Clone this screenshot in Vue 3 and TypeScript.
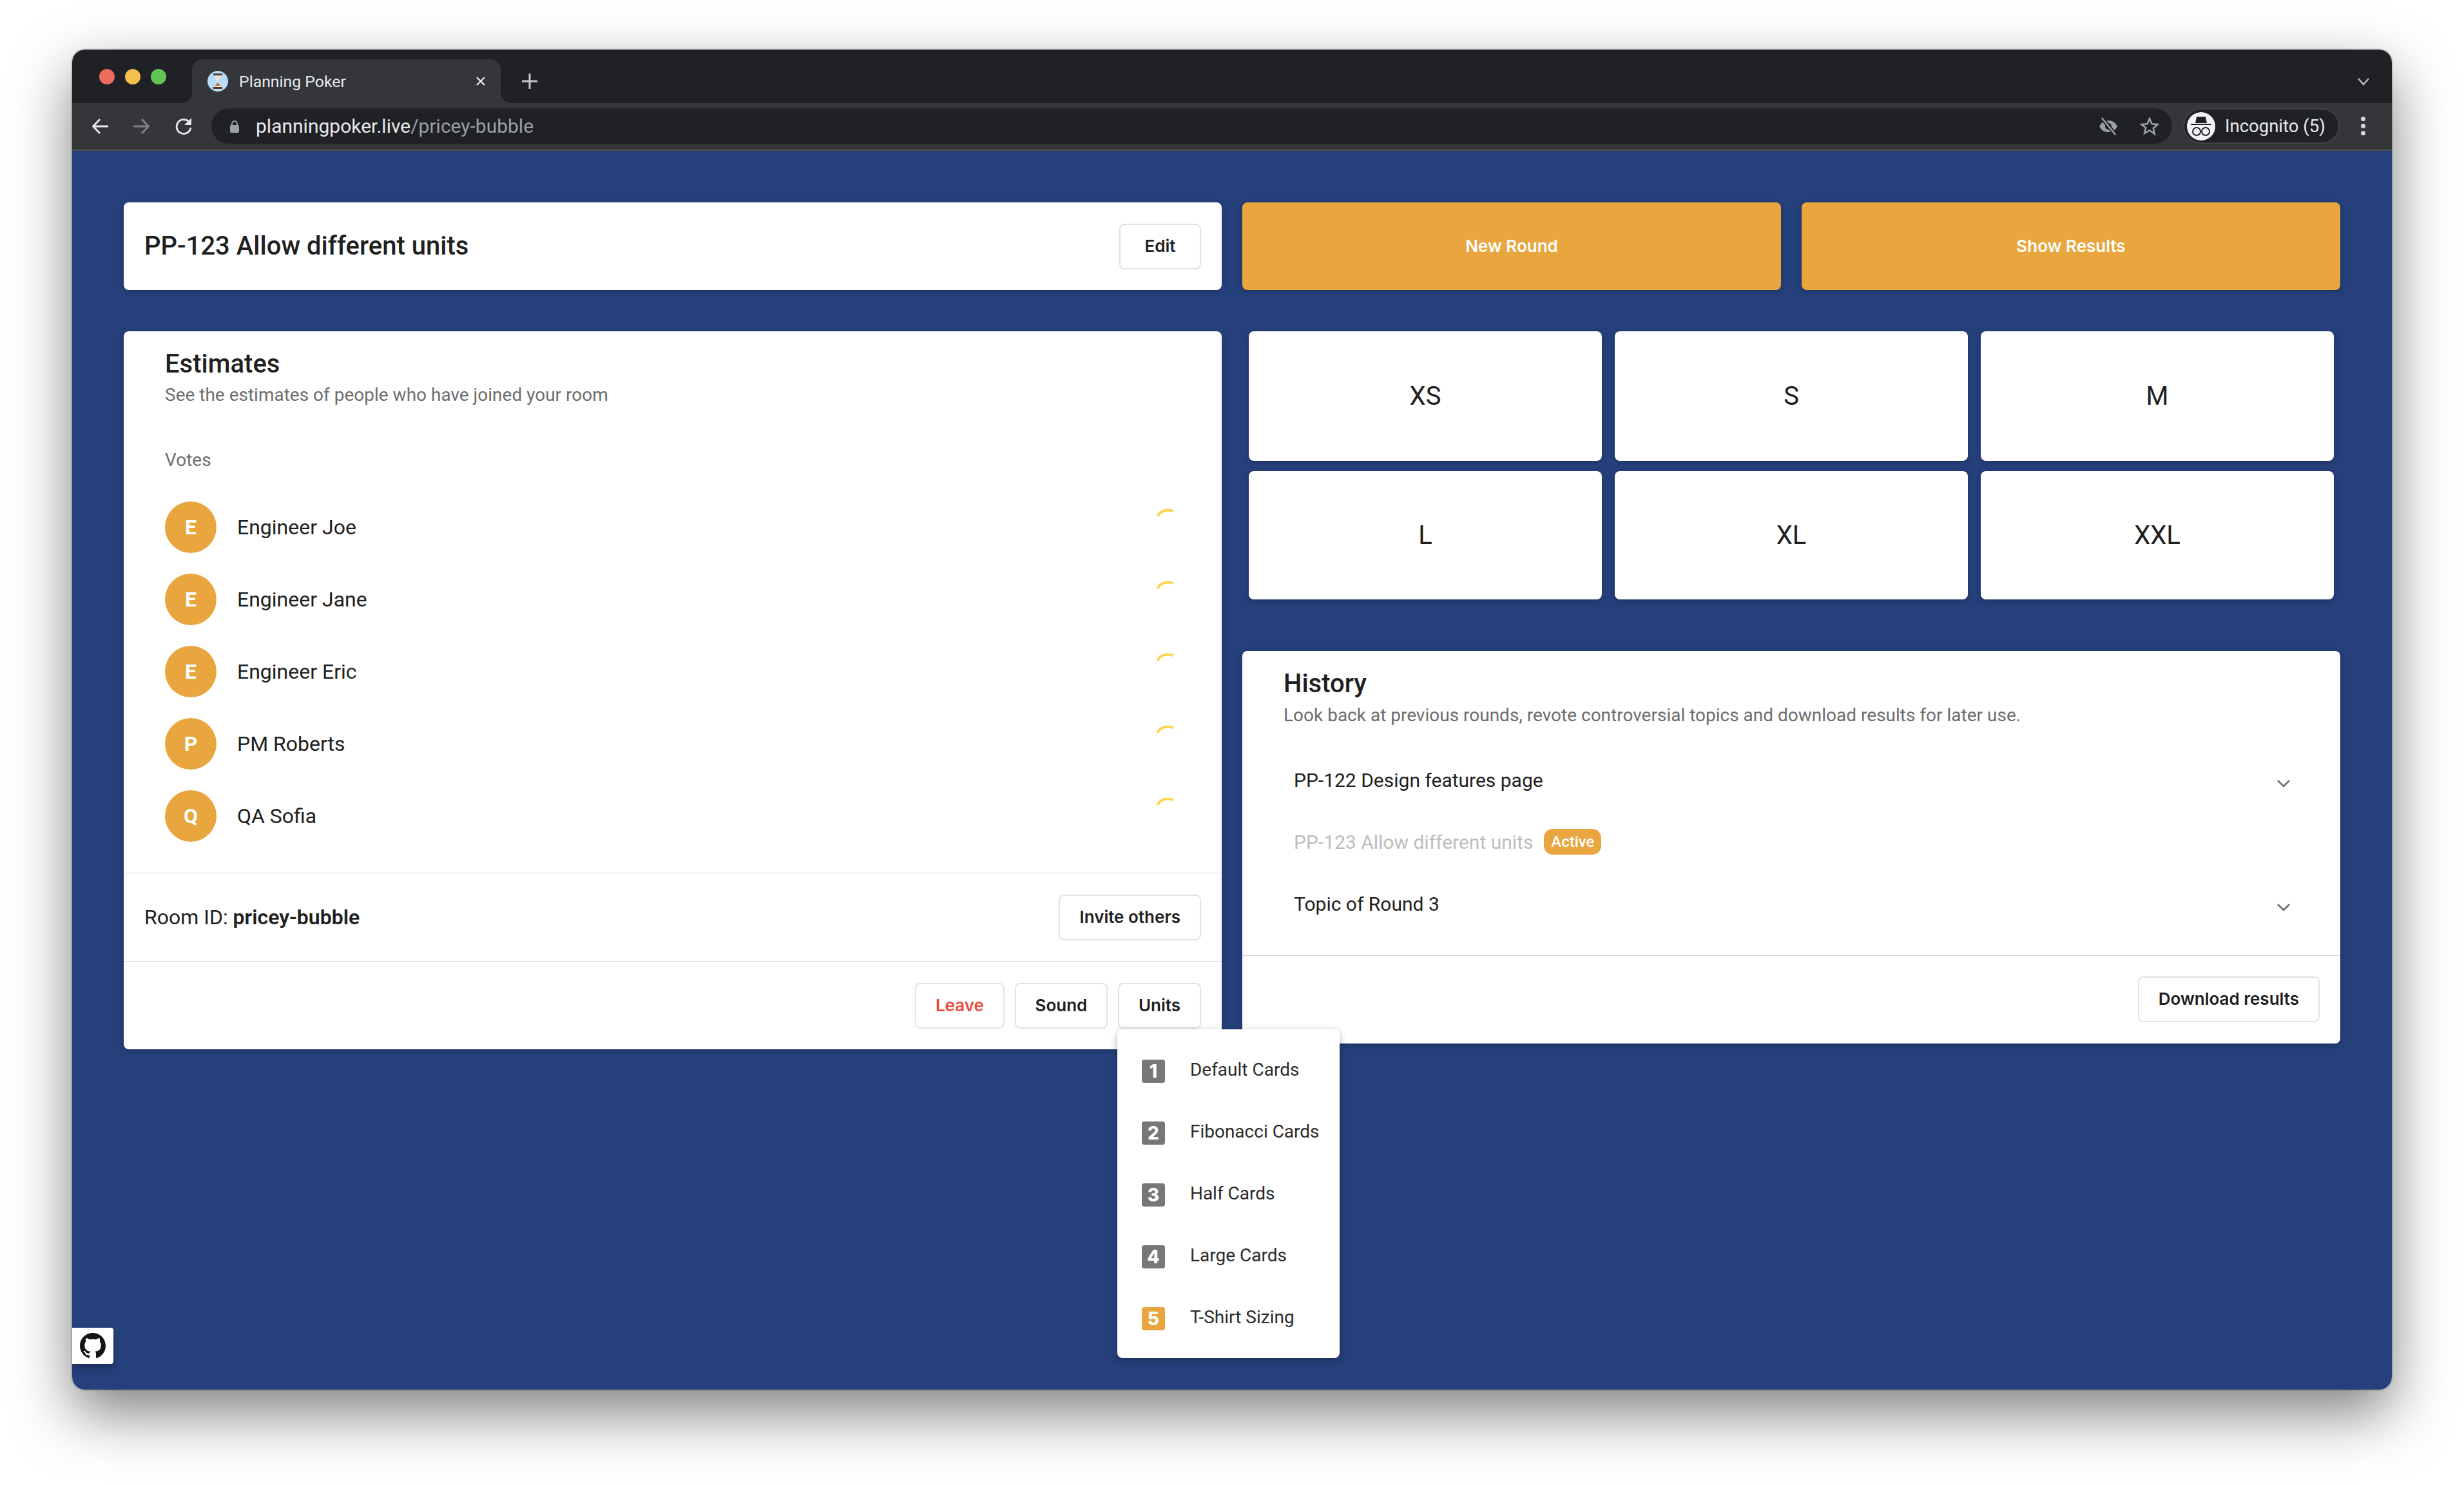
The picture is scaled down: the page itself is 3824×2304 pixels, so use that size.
<script setup lang="ts">
const voters = [
  { initial: 'E', name: 'Engineer Joe' },
  { initial: 'E', name: 'Engineer Jane' },
  { initial: 'E', name: 'Engineer Eric' },
  { initial: 'P', name: 'PM Roberts' },
  { initial: 'Q', name: 'QA Sofia' },
];

const cards = ['XS', 'S', 'M', 'L', 'XL', 'XXL'];

const units = [
  { id: 1, label: 'Default Cards' },
  { id: 2, label: 'Fibonacci Cards' },
  { id: 3, label: 'Half Cards' },
  { id: 4, label: 'Large Cards' },
  { id: 5, label: 'T-Shirt Sizing', active: true },
];
</script>

<template>
  <div class="window">
    <div class="tabstrip">
      <div class="lights">
        <span class="light red"></span>
        <span class="light yellow"></span>
        <span class="light green"></span>
      </div>
      <div class="tab">
        <span class="favicon">
          <svg width="20" height="26" viewBox="0 0 20 26">
            <rect x="3" y="1" width="14" height="3" fill="#5b3a22" />
            <rect x="3" y="22" width="14" height="3" fill="#5b3a22" />
            <path d="M5 4h10c0 5-4 7-4 9s4 4 4 9H5c0-5 4-7 4-9S5 9 5 4z" fill="#e8e4dc" />
            <path d="M6 20c1-3 3-4 4-5 1 1 3 2 4 5z" fill="#b97a3f" />
          </svg>
        </span>
        <span class="tab-title">Planning Poker</span>
        <svg class="tab-close" width="16" height="16" viewBox="0 0 16 16">
          <path d="M2 2l12 12M14 2L2 14" stroke="#e8eaed" stroke-width="2.4" />
        </svg>
      </div>
      <svg class="new-tab" width="26" height="26" viewBox="0 0 26 26">
        <path d="M13 1v24M1 13h24" stroke="#c4c7cb" stroke-width="3" />
      </svg>
      <svg class="tab-menu" width="20" height="14" viewBox="0 0 20 14">
        <path d="M2 2l8 9 8-9" fill="none" stroke="#bdc1c6" stroke-width="2.4" />
      </svg>
    </div>

    <div class="toolbar">
      <svg class="nav" width="28" height="26" viewBox="0 0 28 26">
        <path d="M26 13H3M13 2L2.500 13 13 24" fill="none" stroke="#e8eaed" stroke-width="2.800" />
      </svg>
      <svg class="nav" width="28" height="26" viewBox="0 0 28 26">
        <path d="M2 13h23M15 2l10.500 11L15 24" fill="none" stroke="#7f8286" stroke-width="2.800" />
      </svg>
      <svg class="nav reload" width="28" height="28" viewBox="0 0 28 28">
        <path d="M23 8a11 11 0 1 0 2 8" fill="none" stroke="#e8eaed" stroke-width="2.800" />
        <path d="M26 1v11H15z" fill="#e8eaed" />
      </svg>
      <div class="omnibox">
        <svg width="16" height="20" viewBox="0 0 16 20">
          <path d="M4 9V6a4 4 0 0 1 8 0v3" fill="none" stroke="#9aa0a6" stroke-width="2" />
          <rect x="1" y="8" width="14" height="12" rx="2" fill="#9aa0a6" />
        </svg>
        <span class="url"><span class="host">planningpoker.live</span><span class="path">/pricey-bubble</span></span>
        <svg class="eye" width="30" height="28" viewBox="0 0 30 28">
          <path d="M1 14c3-6 8-9 14-9s11 3 14 9c-3 6-8 9-14 9S4 20 1 14z" fill="#9aa0a6" />
          <circle cx="15" cy="14" r="5" fill="#202124" />
          <path d="M5 1l21 26" stroke="#202124" stroke-width="6" />
          <path d="M5 1l21 26" stroke="#9aa0a6" stroke-width="2.600" />
        </svg>
        <svg class="star" width="30" height="30" viewBox="0 0 30 30">
          <path d="M15 3l3.600 8.300 9 .8-6.800 5.900 2 8.800L15 21.200 7.200 25.800l2-8.800L2.400 12.100l9-.8z" fill="none" stroke="#9aa0a6" stroke-width="2.600" />
        </svg>
      </div>
      <div class="profile">
        <span class="incognito">
          <svg width="32" height="34" viewBox="0 0 32 34">
            <path d="M9 2h14l2 10H7z" fill="#202124" />
            <path d="M0 14h32" stroke="#202124" stroke-width="2" />
            <circle cx="9" cy="25" r="6" fill="none" stroke="#202124" stroke-width="2" />
            <circle cx="23" cy="25" r="6" fill="none" stroke="#202124" stroke-width="2" />
            <path d="M15 25h2" stroke="#202124" stroke-width="2" />
          </svg>
        </span>
        <span class="profile-name">Incognito (5)</span>
      </div>
      <div class="kebab"><i></i><i></i><i></i></div>
    </div>

    <div class="page">
      <section class="columns top">
        <div class="card title-card">
          <h1>PP-123 Allow different units</h1>
          <button class="btn edit">Edit</button>
        </div>
        <div class="actions">
          <button class="action">New Round</button>
          <button class="action">Show Results</button>
        </div>
      </section>

      <section class="columns">
        <div class="card estimates">
          <h2>Estimates</h2>
          <p class="sub">See the estimates of people who have joined your room</p>
          <p class="sub votes">Votes</p>
          <ul class="voters">
            <li v-for="voter in voters" :key="voter.name">
              <span class="avatar">{{ voter.initial }}</span>
              <span class="name">{{ voter.name }}</span>
              <svg class="spinner" width="30" height="14" viewBox="0 0 30 14">
                <path d="M2.500 12C6 5 14 0 27 4" fill="none" stroke="#fdd551" stroke-width="4" />
              </svg>
            </li>
          </ul>
          <div class="card-row room">
            <span class="room-id">Room ID: <b>pricey-bubble</b></span>
            <button class="btn">Invite others</button>
          </div>
          <div class="card-row tools">
            <button class="btn danger">Leave</button>
            <button class="btn sound">Sound</button>
            <div class="units">
              <button class="btn">Units</button>
              <div class="menu">
                <div v-for="unit in units" :key="unit.id" class="menu-item">
                  <span class="tile" :class="{ active: unit.active }">{{ unit.id }}</span>
                  <span>{{ unit.label }}</span>
                </div>
              </div>
            </div>
          </div>
        </div>

        <div class="right">
          <div class="deck">
            <button v-for="card in cards" :key="card" class="poker-card">{{ card }}</button>
          </div>
          <div class="card history">
            <h2>History</h2>
            <p class="sub">Look back at previous rounds, revote controversial topics and download results for later use.</p>
            <div class="rounds">
              <div class="round">
                <span>PP-122 Design features page</span>
                <svg class="chevron" width="24" height="14" viewBox="0 0 24 14">
                  <path d="M3 3l9 9 9-9" fill="none" stroke="#6b6b6b" stroke-width="2.600" />
                </svg>
              </div>
              <div class="round current">
                <span>PP-123 Allow different units</span>
                <span class="badge">Active</span>
              </div>
              <div class="round">
                <span>Topic of Round 3</span>
                <svg class="chevron" width="24" height="14" viewBox="0 0 24 14">
                  <path d="M3 3l9 9 9-9" fill="none" stroke="#6b6b6b" stroke-width="2.600" />
                </svg>
              </div>
            </div>
            <div class="history-foot">
              <button class="btn">Download results</button>
            </div>
          </div>
        </div>
      </section>

      <a class="github">
        <svg width="40" height="40" viewBox="0 0 16 16">
          <path fill="#161514" d="M8 0C3.580 0 0 3.580 0 8c0 3.540 2.290 6.530 5.470 7.590.4.070.55-.17.55-.38 0-.19-.01-.82-.01-1.490-2.010.37-2.530-.49-2.690-.94-.09-.23-.48-.94-.82-1.130-.28-.15-.68-.52-.01-.53.63-.01 1.080.58 1.230.82.72 1.210 1.870.87 2.330.66.07-.52.28-.87.51-1.070-1.780-.2-3.640-.89-3.640-3.950 0-.87.31-1.590.82-2.150-.08-.2-.36-1.020.08-2.120 0 0 .67-.21 2.200.82.64-.18 1.320-.27 2-.27.68 0 1.360.09 2 .27 1.530-1.040 2.200-.82 2.200-.82.44 1.100.16 1.920.08 2.120.51.56.82 1.270.82 2.150 0 3.070-1.870 3.750-3.650 3.950.29.25.54.73.54 1.480 0 1.070-.01 1.930-.01 2.200 0 .21.15.46.55.38A8.013 8.013 0 0 0 16 8c0-4.420-3.580-8-8-8z" />
        </svg>
      </a>
    </div>
  </div>
</template>

<style scoped>
.window {
  position: relative;
  width: 3600px;
  height: 2079px;
  margin-left: 112px;
  display: flex;
  flex-direction: column;
  border-radius: 20px;
  overflow: hidden;
  font-family: Roboto, "Liberation Sans", sans-serif;
  color: #202020;
}

/* browser chrome */
.tabstrip {
  position: relative;
  flex: none;
  height: 83px;
  background: #202124;
  display: flex;
  align-items: flex-end;
}
.lights {
  position: absolute;
  left: 42px;
  top: 30px;
  display: flex;
  gap: 16px;
}
.light {
  width: 24px;
  height: 24px;
  border-radius: 50%;
}
.red { background: #ed6a5e; }
.yellow { background: #f5bf4f; }
.green { background: #61c554; }
.tab {
  position: relative;
  margin-left: 186px;
  width: 479px;
  height: 68px;
  background: #35363a;
  border-radius: 16px 16px 0 0;
  display: flex;
  align-items: center;
  box-sizing: border-box;
  padding: 0 23px 0 24px;
}
.tab::before,
.tab::after {
  content: "";
  position: absolute;
  bottom: 0;
  width: 16px;
  height: 16px;
}
.tab::before {
  left: -16px;
  background: radial-gradient(circle at 0 0, #202124 15.500px, #35363a 16px);
}
.tab::after {
  right: -16px;
  background: radial-gradient(circle at 100% 0, #202124 15.500px, #35363a 16px);
}
.favicon {
  width: 32px;
  height: 32px;
  border-radius: 50%;
  background: #b5dcf8;
  display: flex;
  align-items: center;
  justify-content: center;
}
.tab-title {
  flex: 1;
  margin-left: 17px;
  font-size: 24.800px;
  color: #e8eaed;
}
.new-tab {
  margin: 0 0 21px 32px;
}
.tab-menu {
  position: absolute;
  right: 34px;
  top: 43px;
}
.toolbar {
  flex: none;
  height: 72px;
  background: #35363a;
  border-bottom: 2px solid #505257;
  display: flex;
  align-items: center;
  position: relative;
}
.nav { margin-left: 30px; margin-right: 5px; }
.nav.reload { margin-left: 33px; }
.omnibox {
  position: absolute;
  left: 216px;
  top: 8px;
  width: 3043px;
  height: 55px;
  background: #202124;
  border-radius: 28px;
  display: flex;
  align-items: center;
  box-sizing: border-box;
  padding-left: 28px;
}
.url {
  flex: 1;
  margin-left: 25px;
  font-size: 30px;
}
.host { color: #e8eaed; }
.path { color: #9aa0a6; }
.eye { margin-right: 34px; }
.star { margin-right: 20px; }
.profile {
  position: absolute;
  left: 3276px;
  top: 8px;
  width: 243px;
  height: 55px;
  box-sizing: border-box;
  border: 2px solid #3f4146;
  border-radius: 28px;
  background: #202124;
  display: flex;
  align-items: center;
}
.incognito {
  width: 44px;
  height: 44px;
  margin-left: 4px;
  border-radius: 50%;
  background: #f1f3f4;
  display: flex;
  align-items: center;
  justify-content: center;
}
.profile-name {
  margin-left: 15px;
  font-size: 27.500px;
  color: #e8eaed;
}
.kebab {
  position: absolute;
  left: 3552px;
  top: 21px;
  display: flex;
  flex-direction: column;
  gap: 4px;
}
.kebab i {
  width: 7px;
  height: 7px;
  border-radius: 50%;
  background: #d5d7da;
}

/* app */
.page {
  position: relative;
  flex: 1;
  background: #26407c;
  padding: 80px;
  display: flex;
  flex-direction: column;
  gap: 64px;
}
.columns {
  display: grid;
  grid-template-columns: 1704px 1704px;
  gap: 32px;
  align-items: start;
}
.card {
  background: #fff;
  border-radius: 8px;
  box-shadow: 0 2px 8px rgba(0, 0, 0, 0.25);
}
.top { height: 136px; }
.title-card {
  height: 136px;
  display: flex;
  align-items: center;
  justify-content: space-between;
  padding: 0 32px;
  box-sizing: border-box;
}
h1 {
  margin: 0 0 2px;
  font-size: 40px;
  font-weight: 500;
}
.btn {
  height: 71px;
  padding: 0 30px 2px;
  background: #fff;
  border: 2px solid #e3e3e3;
  border-radius: 8px;
  font: 600 26px Inter, "Liberation Sans", sans-serif;
  color: #202020;
}
.edit { width: 127px; padding: 0 0 2px; }
.sound { width: 144px; padding: 0 0 2px; }
.danger { color: #e74c3c; }
.actions {
  display: grid;
  grid-template-columns: 1fr 1fr;
  gap: 32px;
}
.action {
  height: 136px;
  padding-bottom: 2px;
  border: 0;
  border-radius: 8px;
  background: #e9a63e;
  color: #fff;
  font: 600 26px Inter, "Liberation Sans", sans-serif;
  box-shadow: 0 2px 8px rgba(0, 0, 0, 0.25);
}
h2 {
  margin: 0;
  font-size: 40px;
  line-height: 48px;
  font-weight: 500;
}
.sub {
  margin: 0;
  font-size: 28px;
  line-height: 40px;
  color: #6d6d6d;
}
.estimates {
  height: 1114px;
  padding-top: 27px;
  box-sizing: border-box;
}
.estimates h2,
.estimates .sub { padding-left: 64px; }
.estimates .sub { margin-top: 4px; }
.estimates .votes { margin-top: 61px; }
.voters {
  list-style: none;
  margin: 44px 0 48px;
  padding: 0 0 0 64px;
  display: flex;
  flex-direction: column;
  gap: 32px;
}
.voters li {
  display: flex;
  align-items: center;
  height: 80px;
}
.avatar {
  width: 80px;
  height: 80px;
  border-radius: 50%;
  background: #e9a63e;
  color: #fff;
  font-size: 32px;
  font-weight: 700;
  display: flex;
  align-items: center;
  justify-content: center;
}
.name {
  flex: 1;
  margin-left: 32px;
  font-size: 32px;
}
.spinner {
  align-self: flex-start;
  margin: 11px 72px 0 0;
}
.card-row {
  height: 137px;
  box-sizing: border-box;
  border-top: 1px solid #d8d8d8;
  padding: 0 32px;
  display: flex;
  align-items: center;
  justify-content: flex-end;
  gap: 16px;
}
.room { justify-content: space-between; }
.room-id { font-size: 32px; }
.room-id b { font-weight: 600; }
.units { position: relative; }
.menu {
  position: absolute;
  z-index: 5;
  left: -1px;
  top: 72px;
  width: 345px;
  height: 510px;
  box-sizing: border-box;
  padding: 15px 0;
  background: #fff;
  border-radius: 8px;
  box-shadow: 0 3px 12px rgba(0, 0, 0, 0.3);
}
.menu-item {
  height: 96px;
  padding-left: 38px;
  display: flex;
  align-items: center;
  font-size: 28px;
  color: #2a2a2a;
}
.tile {
  width: 36px;
  height: 36px;
  margin: 4px 39px 0 0;
  border-radius: 4px;
  background: #777;
  color: #fff;
  font: 800 28px Inter, "Liberation Sans", sans-serif;
  display: flex;
  align-items: center;
  justify-content: center;
}
.tile.active { background: #e9a63e; }

.deck {
  display: grid;
  grid-template-columns: repeat(3, 548px);
  grid-template-rows: 201px 199px;
  gap: 16px 20px;
  padding: 0 10px;
}
.poker-card {
  background: #fff;
  border: 0;
  border-radius: 8px;
  font: 400 40px Roboto, "Liberation Sans", sans-serif;
  color: #202020;
  box-shadow: 0 2px 8px rgba(0, 0, 0, 0.25);
}
.history {
  margin-top: 80px;
  height: 609px;
  padding-top: 27px;
  box-sizing: border-box;
}
.history h2,
.history .sub { padding-left: 64px; }
.history .sub { margin-top: 5px; }
.rounds {
  margin-top: 56px;
  padding: 0 76px 0 80px;
  display: flex;
  flex-direction: column;
  gap: 48px;
  height: 296px;
}
.round {
  height: 48px;
  display: flex;
  align-items: center;
  font-size: 30px;
}
.round span:first-child { flex: none; }
.round .chevron {
  margin-left: auto;
  margin-top: 10px;
}
.current { color: #bdbdbd; }
.badge {
  margin-left: 17px;
  height: 40px;
  width: 89px;
  border-radius: 14px;
  background: #e9a63e;
  color: #fff;
  font-size: 24px;
  font-weight: 500;
  display: flex;
  align-items: center;
  justify-content: center;
}
.history-foot {
  height: 136px;
  box-sizing: border-box;
  border-top: 1px solid #d8d8d8;
  padding-right: 32px;
  display: flex;
  align-items: center;
  justify-content: flex-end;
}
.github {
  position: absolute;
  left: 0;
  bottom: 40px;
  width: 64px;
  height: 56px;
  background: #fff;
  border-radius: 0 4px 4px 0;
  box-shadow: 0 6px 12px rgba(0, 0, 0, 0.3);
  display: flex;
  align-items: center;
  justify-content: center;
}
</style>

<style>
html, body {
  margin: 0;
  background: #fff;
}
body {
  height: 2304px;
  overflow: hidden;
}
#app {
  padding-top: 77px;
}
#app > .window {
  box-shadow: 0 36px 90px rgba(0, 0, 0, 0.5), 0 0 3px rgba(0, 0, 0, 0.5);
}
</style>
